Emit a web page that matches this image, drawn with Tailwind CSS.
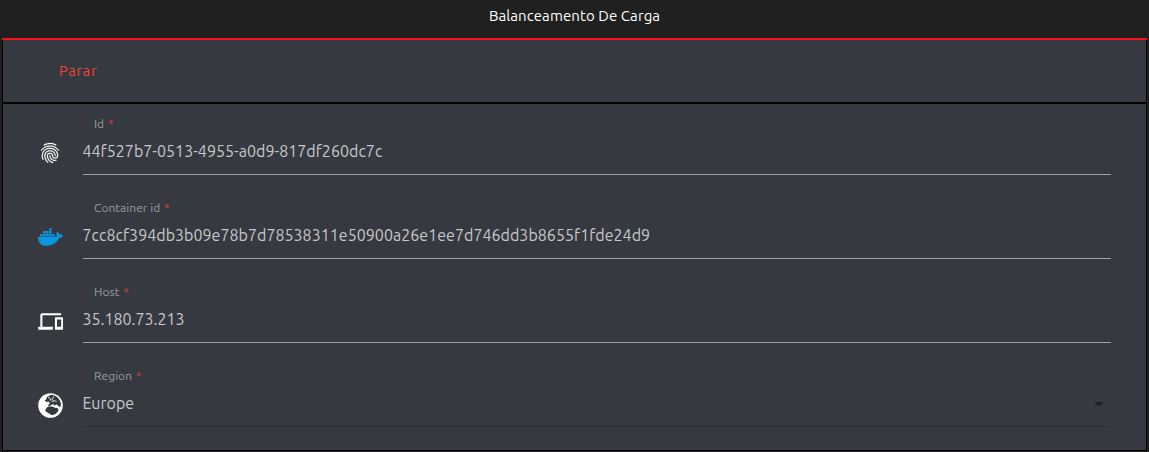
<!DOCTYPE html>
<html lang="pt">
<head>
<meta charset="utf-8">
<title>Balanceamento De Carga</title>
<script src="https://cdn.jsdelivr.net/npm/@tailwindcss/browser@4"></script>
</head>
<body class="h-[452px] overflow-hidden bg-[#202020] font-['Ubuntu','Noto_Sans',sans-serif]">
<div class="flex h-full flex-col px-[2px]">
  <header class="flex h-[38px] shrink-0 justify-center pt-[6px] text-[15px] leading-5 text-white"><h1><span class="tracking-[0.08px]">Balanceamento De Carga</span></h1></header>
  <main class="flex h-[413px] flex-col border-t-2 border-[#fc0d1b] bg-[#36393f]">
    <div class="flex h-[64px] shrink-0 border-x border-b-2 border-black pl-[56px] pt-[21px] text-[14.500px] leading-5 text-[#f44336]"><button class="h-5 tracking-[0.800px]">Parar</button></div>
    <form class="flex grow flex-col border-x border-b border-black pl-[34px] pr-[35px]">
      <div class="flex h-[84px] shrink-0">
        <div class="w-[46px] pt-[37px]"><svg class="ml-px h-6 w-6" viewBox="0 0 24 24" fill="#fff" stroke="#fff" stroke-width=".2"><path d="M17.81 4.47c-.08 0-.16-.02-.23-.06C15.66 3.42 14 3 12.01 3c-1.98 0-3.86.47-5.57 1.41-.24.13-.54.04-.68-.2-.13-.24-.04-.55.2-.68C7.82 2.52 9.86 2 12.01 2c2.13 0 3.99.47 6.03 1.52.25.13.34.43.21.67-.09.18-.26.28-.44.28zM3.5 9.72c-.1 0-.2-.03-.29-.09-.23-.16-.28-.47-.12-.7.99-1.4 2.25-2.5 3.75-3.27C9.98 4.04 14 4.03 17.15 5.65c1.5.77 2.76 1.86 3.75 3.25.16.22.11.54-.12.7-.23.16-.54.11-.7-.12-.9-1.26-2.04-2.25-3.39-2.94-2.87-1.47-6.54-1.47-9.4.01-1.36.7-2.5 1.7-3.4 2.96-.08.14-.23.21-.39.21zm6.25 12.07c-.13 0-.26-.05-.35-.15-.87-.87-1.34-1.43-2.01-2.64-.69-1.23-1.05-2.73-1.05-4.34 0-2.97 2.54-5.39 5.66-5.39s5.66 2.42 5.66 5.39c0 .28-.22.5-.5.5s-.5-.22-.5-.5c0-2.42-2.09-4.39-4.66-4.39-2.57 0-4.66 1.97-4.66 4.39 0 1.44.32 2.77.93 3.85.64 1.15 1.08 1.64 1.85 2.42.19.2.19.51 0 .71-.11.1-.24.15-.37.15zm7.17-1.85c-1.19 0-2.24-.3-3.1-.89-1.49-1.01-2.38-2.65-2.38-4.39 0-.28.22-.5.5-.5s.5.22.5.5c0 1.41.72 2.74 1.94 3.56.71.48 1.54.71 2.54.71.24 0 .64-.03 1.04-.1.27-.05.53.13.58.41.05.27-.13.53-.41.58-.57.11-1.07.12-1.21.12zM14.91 22c-.04 0-.09-.01-.13-.02-1.59-.44-2.63-1.03-3.72-2.1-1.4-1.39-2.17-3.24-2.17-5.22 0-1.62 1.38-2.94 3.08-2.94 1.7 0 3.08 1.32 3.08 2.94 0 1.07.93 1.94 2.08 1.94s2.08-.87 2.08-1.94c0-3.77-3.25-6.83-7.25-6.83-2.84 0-5.44 1.58-6.61 4.03-.39.81-.59 1.76-.59 2.8 0 .78.07 2.01.67 3.61.1.26-.03.55-.29.64-.26.1-.55-.04-.64-.29-.49-1.31-.73-2.61-.73-3.96 0-1.2.23-2.29.68-3.24 1.33-2.79 4.28-4.6 7.51-4.6 4.55 0 8.25 3.51 8.25 7.83 0 1.62-1.38 2.94-3.08 2.94s-3.08-1.32-3.08-2.94c0-1.07-.93-1.94-2.08-1.94s-2.08.87-2.08 1.94c0 1.71.66 3.31 1.87 4.51.95.94 1.86 1.46 3.27 1.85.27.07.42.35.35.61-.05.23-.26.38-.47.38z"/></svg></div>
        <div class="grow">
          <label class="block h-[39px] pl-[11px] pt-[12px] text-xs leading-4 text-[#9b9c9f]"><span class="tracking-[0.05px]">Id</span> <b class="ml-px font-normal text-[#e04038]">*</b></label>
          <div class="h-[32px] border-b border-[#a0a1a3] text-base leading-[17px] text-[#c7c8ca]"><span class="-ml-[0.5px] tracking-[0.03px]">44f527b7-0513-4955-a0d9-817df260dc7c</span></div>
        </div>
      </div>
      <div class="flex h-[84px] shrink-0">
        <div class="w-[46px] pt-[39px]"><svg class="ml-px h-[20px] w-[25px]" viewBox="0 0 640 512" fill="#0b96e0"><path d="M349.900 236.300h-66.100v-59.400h66.100v59.400zm0-204.300h-66.100v60.700h66.100V32zm78.200 144.800H362v59.400h66.100v-59.400zm-156.300-72.100h-66.100v60.100h66.100v-60.100zm78.100 0h-66.100v60.100h66.100v-60.100zm276.800 100c-14.400-9.700-47.600-13.200-73.100-8.400-3.300-24-16.700-44.900-41.100-63.700l-14-9.300-9.300 14c-18.400 27.800-23.400 73.600-3.700 103.800-8.700 4.700-25.800 11.100-48.400 10.700H2.400c-8.700 50.800 5.800 116.800 44 162.100 37.100 43.900 92.700 66.200 165.400 66.200 157.400 0 273.900-72.500 328.400-204.200 21.400.4 67.600.1 91.300-45.200 1.500-2.500 6.600-13.200 8.500-17.100l-13.300-8.900zm-511.100-27.900h-66v59.400h66.100v-59.400zm78.100 0h-66.100v59.400h66.100v-59.400zm78.100 0h-66.100v59.400h66.100v-59.400zm-78.100-72.100h-66.100v60.100h66.100v-60.100z"/></svg></div>
        <div class="grow">
          <label class="block h-[39px] pl-[11px] pt-[12px] text-xs leading-4 text-[#9b9c9f]"><span class="tracking-[0.05px]">Container id</span> <b class="ml-px font-normal text-[#e04038]">*</b></label>
          <div class="h-[32px] border-b border-[#a0a1a3] text-base leading-[17px] text-[#c7c8ca]"><span class="-ml-[0.5px] tracking-[0.03px]">7cc8cf394db3b09e78b7d78538311e50900a26e1ee7d746dd3b8655f1fde24d9</span></div>
        </div>
      </div>
      <div class="flex h-[84px] shrink-0">
        <div class="w-[46px] pt-[37px]"><svg class="ml-[0.5px] h-[25px] w-[25.500px]" viewBox="0 0 24 24" fill="#fff"><path d="M4 6h18V4H4c-1.100 0-2 .9-2 2v11H0v3h14v-3H4V6zm19 2h-6c-.55 0-1 .45-1 1v10c0 .55.45 1 1 1h6c.55 0 1-.45 1-1V9c0-.55-.45-1-1-1zm-1 9h-4v-7h4v7z"/></svg></div>
        <div class="grow">
          <label class="block h-[39px] pl-[11px] pt-[12px] text-xs leading-4 text-[#9b9c9f]"><span class="tracking-[0.05px]">Host</span> <b class="ml-px font-normal text-[#e04038]">*</b></label>
          <div class="h-[32px] border-b border-[#a0a1a3] text-base leading-[17px] text-[#c7c8ca]"><span class="-ml-[0.5px] tracking-[0px]">35.180.73.213</span></div>
        </div>
      </div>
      <div class="flex h-[84px] shrink-0">
        <div class="w-[46px] pt-[37px]"><svg class="ml-px h-[25px] w-[25px]" viewBox="0 0 25 25"><circle cx="12.500" cy="12.500" r="12.300" fill="#fff"/><g fill="#36393f"><path d="M6.500 7.500l1.500-.8.5-2 2-1.700 3-1.200 3 .7 3 1.800 2.300 3 1.200 3.500-.5 3-2-.3-1.500-2-1.500.2-.5 1.300-1.500-1.800-2.500.8-2 1.500-1-1 2-2.500-1.500-1.500-2 .5z"/><path d="M7.500 16.500l1.500-2.200 3-1 3 .5 2 1 2.200.2 1.300 1-.5 2.500-2.500 2.500-3.500 1.300-2.500-1.500-2-1.300-2-1z"/></g><path d="M10 4l1.500 1 1.500 2.500 1.500-1.500 1-2.500M14 8.500l3-1 1.500 1.500" fill="none" stroke="#fff" stroke-width="0.900"/></svg></div>
        <div class="grow">
          <label class="block h-[39px] pl-[11px] pt-[12px] text-xs leading-4 text-[#9b9c9f]"><span class="tracking-[0.05px]">Region</span> <b class="ml-px font-normal text-[#e04038]">*</b></label>
          <div class="flex h-[32px] justify-between bg-[repeating-linear-gradient(90deg,#202123_0_1px,#36393f_1px_2px)] bg-[length:100%_1px] bg-bottom bg-no-repeat pr-[7px] text-base leading-[17px] text-[#c7c8ca]"><span class="-ml-[0.5px] tracking-[0px]">Europe</span><svg class="mt-[7px] h-[5px] w-[10px]" viewBox="0 0 10 5" fill="#202123"><path d="M0 0h10L5 5z"/></svg></div>
        </div>
      </div>
    </form>
  </main>
</div>
</body>
</html>
